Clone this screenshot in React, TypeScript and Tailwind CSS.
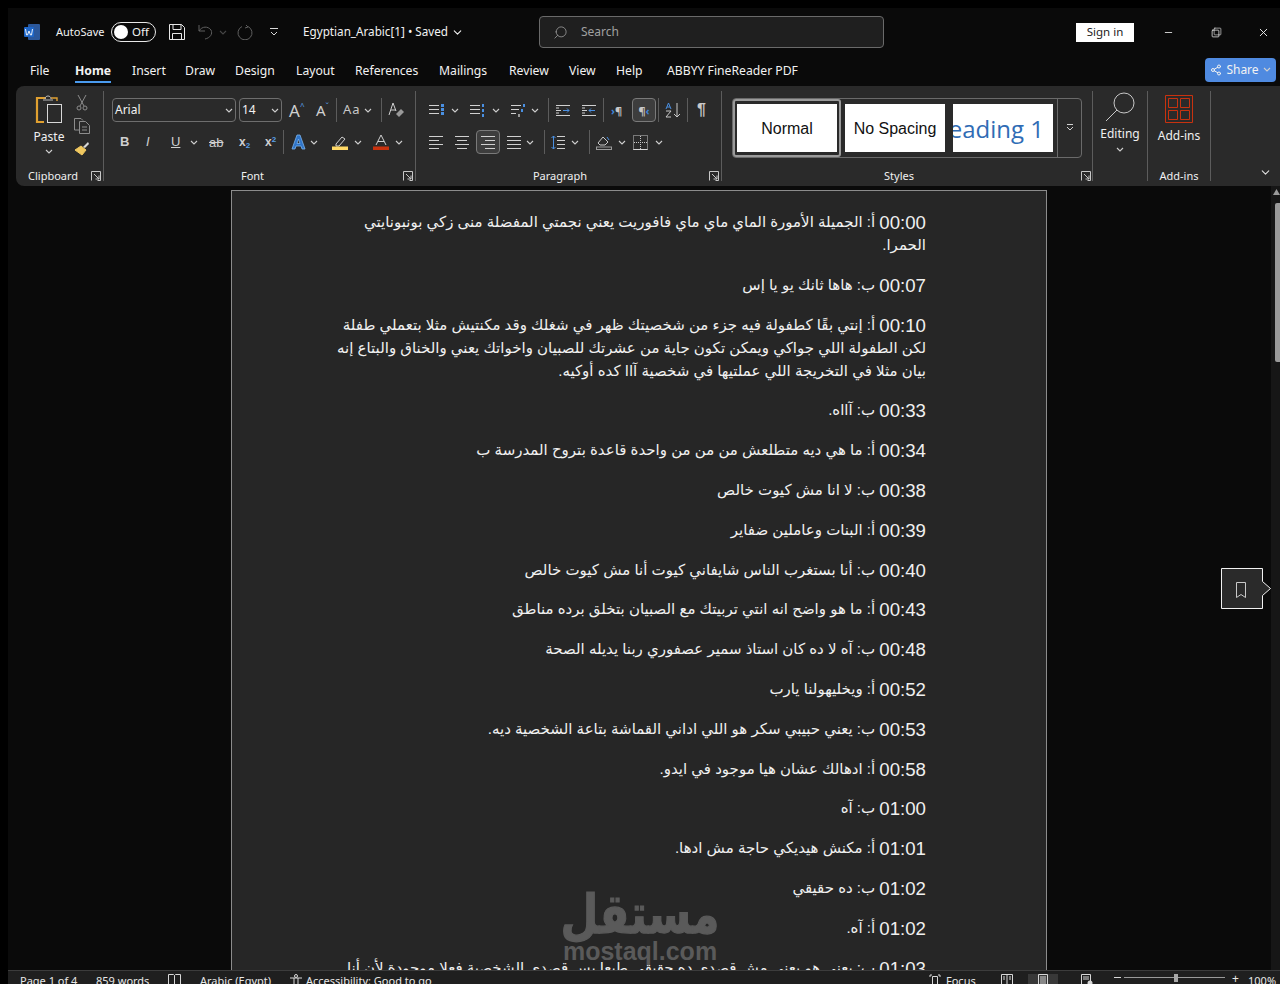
import { ChevronDown, Search, Share2, X, Minus, Square } from "lucide-react";

const ui = "font-['Noto_Sans',sans-serif]";

function Chev({ className = "" }: { className?: string }) {
  return (
    <svg width="8" height="5" viewBox="0 0 8 5" className={"shrink-0 " + className}>
      <path d="M1 1l3 3 3-3" fill="none" stroke="#cfcfcf" strokeWidth="1.1" />
    </svg>
  );
}

function Sep({ className = "" }: { className?: string }) {
  return <div className={"h-[24px] w-px shrink-0 bg-[#5c5c5c] " + className} />;
}

function GroupLabel({ text }: { text: string }) {
  return <div className="text-center text-[11px] leading-[14px] text-[#f0f0f0]">{text}</div>;
}

function Launcher() {
  return (
    <svg width="10" height="10" viewBox="0 0 10 10" className="shrink-0">
      <path d="M.5 9.5V.5h9v9h-3M3 3l5 5M8 4.5V8H4.5" fill="none" stroke="#c8c8c8" />
    </svg>
  );
}

function Lines({ widths, x = 0 }: { widths: number[]; x?: number }) {
  return (
    <>
      {widths.map((w, i) => (
        <line key={i} x1={x} x2={x + w} y1={2.5 + i * 4} y2={2.5 + i * 4} stroke="#d0d0d0" />
      ))}
    </>
  );
}

function AlignIcon({ kind }: { kind: "left" | "center" | "right" | "justify" }) {
  const long = 14;
  const short = 10;
  const xs = kind === "left" ? 0 : kind === "center" ? 2 : 4;
  return (
    <svg width="14" height="15" viewBox="0 0 14 15" className="shrink-0">
      {[0, 1, 2, 3].map((i) => {
        const w = kind === "justify" || i % 2 === 0 ? long : short;
        const x = w === long ? 0 : xs;
        return <line key={i} x1={x} x2={x + w} y1={1.5 + i * 4} y2={1.5 + i * 4} stroke="#d0d0d0" />;
      })}
    </svg>
  );
}

function ClipboardGroup() {
  return (
    <div className="flex h-full w-[87px] shrink-0 flex-col">
      <div className="flex h-[77px] pt-[7px]">
        <div className="ml-[15px] flex w-[36px] flex-col items-center">
          <svg width="30" height="32" viewBox="0 0 30 32">
            <path d="M12 5H3v24h7" fill="none" stroke="#e0a030" strokeWidth="2.2" />
            <path d="M17 5h6v3" fill="none" stroke="#e0a030" strokeWidth="1.4" />
            <path d="M9 7h10M11 6c0-4 6-4 6 0" fill="none" stroke="#b8b8b8" />
            <rect x="13.5" y="11.5" width="14" height="18" fill="#2a2a2a" stroke="#d8d8d8" />
          </svg>
          <div className="mt-[4px] text-[12px] leading-[16px] text-[#f0f0f0]">Paste</div>
          <Chev className="mt-[4px]" />
        </div>
        <div className="ml-[7px] flex flex-col items-center gap-[7px] pt-[1px]">
          <svg width="12" height="17" viewBox="0 0 12 17">
            <path d="M2 1l6 11M10 1L4 12" stroke="#8c8c8c" fill="none" />
            <circle cx="3" cy="14" r="2" stroke="#8c8c8c" fill="none" />
            <circle cx="9" cy="14" r="2" stroke="#8c8c8c" fill="none" />
          </svg>
          <svg width="16" height="16" viewBox="0 0 16 16">
            <path d="M5 12H.5V.5H7l2 2M5.5 3.5h6l4 4v8h-10z M8 9h5M8 12h5" stroke="#8c8c8c" fill="none" />
          </svg>
          <svg width="16" height="15" viewBox="0 0 16 15">
            <path d="M1 9l6-4 5 4-4 5z" fill="#f0c860" stroke="#f0c860" />
            <path d="M9 6l5-5 1 2-4 4" fill="#d8d8d8" />
          </svg>
        </div>
      </div>
      <div className="mt-auto mb-[3px] flex items-center pl-[12px] pr-[1px]">
        <GroupLabel text="Clipboard" />
        <div className="ml-auto pr-[1px]">
          <Launcher />
        </div>
      </div>
    </div>
  );
}

function FontGroup() {
  return (
    <div className="relative flex h-full w-[311px] shrink-0 flex-col pl-[8px]">
      <div className="flex h-[24px] mt-[12px] items-center">
        <div className="flex h-[24px] w-[124px] shrink-0 items-center justify-between rounded-[4px] border border-[#6e6e6e] pl-[2px] pr-[2px] text-[12px] text-[#f2f2f2]">
          <span>Arial</span>
          <Chev />
        </div>
        <div className="ml-[3px] flex h-[24px] w-[43px] shrink-0 items-center justify-between rounded-[4px] border border-[#6e6e6e] pl-[2px] pr-[2px] text-[12px] text-[#f2f2f2]">
          <span>14</span>
          <Chev />
        </div>
        <div className="ml-[7px] flex w-[16px] items-start text-[17px] leading-[17px] text-[#d0d0d0]">
          A<span className="text-[8px] leading-[8px] text-[#5aa0e8]">^</span>
        </div>
        <div className="ml-[11px] flex w-[14px] items-start text-[15px] leading-[15px] text-[#d0d0d0]">
          A<span className="text-[8px] leading-[8px] text-[#5aa0e8]">ˇ</span>
        </div>
        <Sep className="ml-[6px]" />
        <div className="ml-[6px] w-[18px] text-[13px] tracking-[1px] text-[#c8c8c8]">Aa</div>
        <Chev className="ml-[3px]" />
        <Sep className="ml-[9px]" />
        <svg width="17" height="16" viewBox="0 0 17 16" className="ml-[6px]">
          <path d="M1 13L5 1l3 8M3 8h5" fill="none" stroke="#cfcfcf" />
          <path d="M8 12l5-5 3 3-5 5z" fill="#9a9a9a" />
        </svg>
      </div>
      <div className="mt-[8px] flex h-[24px] items-center font-['Liberation_Sans',sans-serif] text-[#cfcfcf]">
        <span className="ml-[8px] w-[9px] text-[13px] font-bold">B</span>
        <span className="ml-[17px] w-[8px] text-[13px] italic">I</span>
        <span className="ml-[17px] w-[10px] text-[13px] underline">U</span>
        <Chev className="ml-[9px]" />
        <span className="ml-[11px] w-[16px] text-[13px] leading-none line-through">ab</span>
        <span className="ml-[14px] w-[12px] text-[12px] font-bold">
          x<sub className="text-[8px] text-[#5aa0e8]">2</sub>
        </span>
        <span className="ml-[14px] w-[12px] text-[12px] font-bold">
          x<sup className="text-[8px] text-[#5aa0e8]">2</sup>
        </span>
        <Sep className="ml-[6px]" />
        <svg width="15" height="16" viewBox="0 0 15 16" className="ml-[7px]">
          <path d="M1 15L6 1h3l5 14h-3l-1-3H5l-1 3zM6 9.5h3L7.5 5z" fill="#2f74c8" stroke="#7ab4ee" strokeWidth=".8" />
        </svg>
        <Chev className="ml-[4px]" />
        <svg width="16" height="16" viewBox="0 0 16 16" className="ml-[14px]">
          <path d="M4 10l6-7 3 2-6 7-3 0z" fill="none" stroke="#cfcfcf" />
          <rect y="12.5" width="16" height="3.5" fill="#ffd966" />
        </svg>
        <Chev className="ml-[6px]" />
        <svg width="16" height="16" viewBox="0 0 16 16" className="ml-[11px]">
          <path d="M3 11L8 1l5 10M5 7.5h6" fill="none" stroke="#cfcfcf" />
          <rect y="12.5" width="16" height="3.5" fill="#c8320f" />
        </svg>
        <Chev className="ml-[6px]" />
      </div>
      <div className="mt-auto mb-[3px] flex items-center">
        <div className="flex-1 pr-[10px]">
          <GroupLabel text="Font" />
        </div>
        <div className="mr-[2px]">
          <Launcher />
        </div>
      </div>
    </div>
  );
}

function ParagraphGroup() {
  return (
    <div className="flex h-full w-[305px] shrink-0 flex-col pl-[13px]">
      <div className="mt-[12px] flex h-[24px] items-center">
        <svg width="16" height="15" viewBox="0 0 16 15">
          <Lines widths={[10, 10, 10]} />
          <rect x="12" y="1" width="3" height="3" fill="#4a90e2" />
          <rect x="12" y="5" width="3" height="3" fill="#4a90e2" />
          <rect x="12" y="9" width="3" height="3" fill="#4a90e2" />
        </svg>
        <Chev className="ml-[6px]" />
        <svg width="16" height="15" viewBox="0 0 16 15" className="ml-[11px]">
          <Lines widths={[10, 10, 10]} />
          <rect x="12" y="1" width="2" height="3" fill="#4a90e2" />
          <rect x="12" y="6" width="2" height="3" fill="#4a90e2" />
          <rect x="12" y="11" width="2" height="3" fill="#4a90e2" />
        </svg>
        <Chev className="ml-[6px]" />
        <svg width="16" height="15" viewBox="0 0 16 15" className="ml-[11px]">
          <Lines widths={[10, 8, 5]} />
          <rect x="12" y="1" width="2" height="3" fill="#4a90e2" />
          <rect x="10" y="6" width="2" height="3" fill="#4a90e2" />
          <rect x="7" y="11" width="2" height="3" fill="#9a9a9a" />
        </svg>
        <Chev className="ml-[4px]" />
        <Sep className="ml-[9px]" />
        <svg width="14" height="11" viewBox="0 0 14 11" className="ml-[7px]">
          <path d="M0 .5h14M0 10.5h14M0 5.5h5M0 3h3M0 8h3" stroke="#d0d0d0" />
          <path d="M7 5.5h6M11 3.5l2 2-2 2" stroke="#4a90e2" fill="none" />
        </svg>
        <svg width="14" height="11" viewBox="0 0 14 11" className="ml-[12px]">
          <path d="M0 .5h14M0 10.5h14M0 5.5h5M0 3h3M0 8h3" stroke="#d0d0d0" />
          <path d="M13 5.5H7M9 3.5l-2 2 2 2" stroke="#4a90e2" fill="none" />
        </svg>
        <Sep className="ml-[7px]" />
        <div className="ml-[7px] flex w-[14px] items-center text-[11px] font-bold leading-none text-[#c8c8c8]">
          <span className="text-[#3f86dc]">›</span>¶
        </div>
        <div className="ml-[7px] flex h-[24px] w-[24px] items-center justify-center rounded-[4px] border border-[#7a7a7a] bg-[#3d3d3d] text-[11px] font-bold leading-none text-[#c8c8c8]">
          ¶<span className="text-[#3f86dc]">‹</span>
        </div>
        <Sep className="ml-[2px]" />
        <svg width="16" height="16" viewBox="0 0 16 16" className="ml-[6px]">
          <path d="M1 7l2.5-6L6 7M2 5h3" fill="none" stroke="#4a90e2" />
          <path d="M1 9h5l-5 6h5" fill="none" stroke="#c8c8c8" />
          <path d="M12 1v14M9 12l3 3 3-3" fill="none" stroke="#c8c8c8" />
        </svg>
        <Sep className="ml-[6px]" />
        <span className="ml-[9px] font-['Liberation_Sans',sans-serif] text-[16px] font-bold leading-none text-[#c8c8c8]">¶</span>
      </div>
      <div className="mt-[8px] flex h-[24px] items-center">
        <AlignIcon kind="left" />
        <div className="ml-[12px]">
          <AlignIcon kind="center" />
        </div>
        <div className="ml-[7px] flex h-[24px] w-[24px] items-center justify-center rounded-[4px] border border-[#7a7a7a] bg-[#3d3d3d]">
          <AlignIcon kind="right" />
        </div>
        <div className="ml-[7px]">
          <AlignIcon kind="justify" />
        </div>
        <Chev className="ml-[5px]" />
        <Sep className="ml-[10px]" />
        <svg width="14" height="15" viewBox="0 0 14 15" className="ml-[6px]">
          <path d="M6 1.5h8M6 5.5h8M6 9.5h8M6 13.5h8" stroke="#d0d0d0" />
          <path d="M2.5 1v13M.5 3l2-2 2 2M.5 12l2 2 2-2" fill="none" stroke="#4a90e2" />
        </svg>
        <Chev className="ml-[6px]" />
        <Sep className="ml-[10px]" />
        <svg width="16" height="16" viewBox="0 0 16 16" className="ml-[6px]">
          <path d="M2 9l5-6 5 5-3 3H4z" fill="none" stroke="#c8c8c8" />
          <path d="M11 3l2 3" stroke="#4a90e2" />
          <rect x=".5" y="13" width="15" height="2.5" fill="none" stroke="#9a9a9a" />
        </svg>
        <Chev className="ml-[6px]" />
        <svg width="15" height="15" viewBox="0 0 15 15" className="ml-[7px]">
          <path d="M.5.5h14v14H.5z" fill="none" stroke="#c8c8c8" strokeDasharray="1 1" />
          <path d="M.5 14.5h14M7.5 1v13M1 7.5h13" fill="none" stroke="#c8c8c8" strokeDasharray="1 1" />
          <path d="M.5 14.5h14" stroke="#d8d8d8" />
        </svg>
        <Chev className="ml-[7px]" />
      </div>
      <div className="mt-auto mb-[3px] flex items-center">
        <div className="flex-1 pr-[18px]">
          <GroupLabel text="Paragraph" />
        </div>
        <div className="mr-[2px]">
          <Launcher />
        </div>
      </div>
    </div>
  );
}

function StyleCard({ children, className = "" }: { children: React.ReactNode; className?: string }) {
  return (
    <div className={"flex h-[48px] w-[100px] shrink-0 items-center overflow-hidden bg-white pt-[2px] " + className}>{children}</div>
  );
}

function StylesGroup() {
  return (
    <div className="flex h-full w-[370px] shrink-0 flex-col pl-[10px]">
      <div className="mt-[12px] flex h-[60px] w-[350px] items-stretch rounded-[4px] border border-[#6a6a6a]">
        <div className="flex items-center gap-[8px]">
          <div className="flex h-[58px] w-[108px] items-center justify-center rounded-[3px] border-2 border-double border-[#9a9a9a]">
            <StyleCard className="justify-center font-['Liberation_Sans',sans-serif] text-[16px] text-[#111]">Normal</StyleCard>
          </div>
          <StyleCard className="-ml-[4px] justify-center font-['Liberation_Sans',sans-serif] text-[16px] text-[#111]">No Spacing</StyleCard>
          <StyleCard className="justify-end pr-[9px] font-['Open_Sans',sans-serif] text-[24px] text-[#2f6cb5]">
            <span className="shrink-0 whitespace-nowrap">Heading 1</span>
          </StyleCard>
        </div>
        <div className="ml-auto flex w-[24px] items-center justify-center border-l border-[#6a6a6a]">
          <svg width="10" height="8" viewBox="0 0 10 8">
            <path d="M2 .5h6M2 3l3 3 3-3" fill="none" stroke="#d0d0d0" />
          </svg>
        </div>
      </div>
      <div className="mt-auto mb-[3px] flex items-center">
        <div className="flex-1 pr-[15px]">
          <GroupLabel text="Styles" />
        </div>
        <div className="mr-[1px]">
          <Launcher />
        </div>
      </div>
    </div>
  );
}

function App() {
  const tabs = [
    { t: "File", cls: "ml-[22px] w-[45px]" },
    { t: "Home", cls: "w-[57px]" },
    { t: "Insert", cls: "w-[53px]" },
    { t: "Draw", cls: "w-[50px]" },
    { t: "Design", cls: "w-[61px]" },
    { t: "Layout", cls: "w-[59px]" },
    { t: "References", cls: "w-[84px]" },
    { t: "Mailings", cls: "w-[70px]" },
    { t: "Review", cls: "w-[60px]" },
    { t: "View", cls: "w-[47px]" },
    { t: "Help", cls: "w-[51px]" },
    { t: "ABBYY FineReader PDF", cls: "" },
  ];

  const paras = [
    ["00:00", "أ: الجميلة الأمورة الماي ماي ماي فافوريت يعني نجمتي المفضلة منى زكي بونبونايتي الحمرا."],
    ["00:07", "ب: هاها ثانك يو يا إس"],
    ["00:10", "أ: إنتي بقًا كطفولة فيه جزء من شخصيتك ظهر في شغلك وقد مكنتيش مثلا بتعملي طفلة لكن الطفولة اللي جواكي ويمكن تكون جاية من عشرتك للصبيان واخواتك يعني والخناق والبتاع إنه بيان مثلا في التخريجة اللي عملتيها في شخصية آاا كده أوكيه."],
    ["00:33", "ب: آااه."],
    ["00:34", "أ: ما هي ديه متطلعش من من من واحدة قاعدة بتروح المدرسة ب"],
    ["00:38", "ب: لا انا مش كيوت خالص"],
    ["00:39", "أ: البنات وعاملين ضفاير"],
    ["00:40", "ب: أنا بستغرب الناس شايفاني كيوت أنا مش كيوت خالص"],
    ["00:43", "أ: ما هو واضح انه انتي تربيتك مع الصبيان بتخلق برده مناطق"],
    ["00:48", "ب: آه لا ده كان استاذ سمير عصفوري ربنا يديله الصحة"],
    ["00:52", "أ: ويخليهولنا يارب"],
    ["00:53", "ب: يعني حبيبي سكر هو اللي اداني القماشة بتاعة الشخصية ديه."],
    ["00:58", "أ: ادهالك عشان هيا موجود في ايدو."],
    ["01:00", "ب: آه"],
    ["01:01", "أ: مكنش هيديكي حاجة مش ادها."],
    ["01:02", "ب: ده حقيقي"],
    ["01:02", "أ: آه."],
    ["01:03", "ب: يعني هو يعني مش قصدي ده حقيقي طبعا بس قصدي الشخصية فعلا موجودة لأن أنا أما بدأ"],
  ];

  return (
    <div className={"h-[984px] w-[1280px] overflow-hidden bg-black pl-[8px] pt-[8px] " + ui}>
      <div className="flex h-[976px] flex-col bg-[#0a0a0a]">
        {/* title bar */}
        <div className="flex h-[48px] shrink-0 items-center text-[12px] text-[#f2f2f2]">
          <svg width="16" height="16" viewBox="0 0 16 16" className="ml-[16px] shrink-0">
            <rect x="4" y="0" width="12" height="16" rx="1" fill="#2b579a" />
            <rect x="0" y="3" width="10" height="10" rx="1" fill="#1e66c8" />
            <path d="M1.5 5l1 6h1l1.5-4 1.5 4h1l1-6" fill="none" stroke="#fff" strokeWidth=".9" />
          </svg>
          <span className="ml-[16px] w-[55px] text-[11px]">AutoSave</span>
          <div className="flex h-[20px] w-[45px] shrink-0 items-center rounded-full border border-[#e8e8e8] pl-[2px]">
            <div className="h-[14px] w-[14px] rounded-full bg-white" />
            <span className="ml-[4px] text-[11.5px]">Off</span>
          </div>
          <svg width="16" height="16" viewBox="0 0 16 16" className="ml-[13px] shrink-0">
            <path d="M.5.5h12l3 3v12H.5zM4 .5v5h8v-5M3.5 15.5v-6h9v6" fill="none" stroke="#e8e8e8" />
          </svg>
          <svg width="16" height="16" viewBox="0 0 16 16" className="ml-[13px] shrink-0">
            <path d="M1 1v6h6M1 7c3-5 9-5 12-1 2 4-1 8-6 9" fill="none" stroke="#5e5e5e" />
          </svg>
          <Chev className="ml-[5px] opacity-30" />
          <svg width="16" height="16" viewBox="0 0 16 16" className="ml-[10px] shrink-0">
            <path d="M5 2.5A7 7 0 1 0 11 2.5M9 1l2 2-3 1" fill="none" stroke="#5e5e5e" />
          </svg>
          <svg width="8" height="8" viewBox="0 0 8 8" className="ml-[17px] shrink-0">
            <path d="M0 .5h8M1 4l3 3 3-3" fill="none" stroke="#d8d8d8" />
          </svg>
          <span className="ml-[25px] whitespace-nowrap text-[11.7px]">Egyptian_Arabic[1] • Saved</span>
          <ChevronDown size={13} className="ml-[3px] shrink-0" />
          <div className="ml-[75px] flex h-[32px] w-[345px] shrink-0 items-center rounded-[4px] border border-[#6a6a6a] bg-[#1f1f1f] pl-[13px] text-[#a0a0a0]">
            <Search size={15} className="-scale-x-100" strokeWidth={1.25} />
            <span className="ml-[13px] text-[12px]">Search</span>
          </div>
          <div className="ml-[192px] flex h-[19px] w-[58px] shrink-0 items-center justify-center bg-white text-[11.5px] text-[#222]">Sign in</div>
          <Minus size={11} className="ml-[29px] shrink-0" strokeWidth={1.8} />
          <div className="relative ml-[37px] h-[11px] w-[11px] shrink-0">
            <Square size={9} className="absolute bottom-0 left-0" strokeWidth={2} />
            <Square size={9} className="absolute right-0 top-0" strokeWidth={1.6} />
          </div>
          <X size={13} className="ml-[35px] shrink-0" strokeWidth={1.7} />
        </div>

        {/* tabs */}
        <div className="flex h-[30px] shrink-0 items-center text-[12.2px] text-[#f2f2f2]">
          {tabs.map((tab) => (
            <div key={tab.t} className={"shrink-0 whitespace-nowrap " + tab.cls}>
              {tab.t === "Home" ? (
                <span className="relative inline-block font-bold">
                  {tab.t}
                  <span className="absolute -bottom-[3px] left-0 h-[2px] w-full bg-[#4a9bef]" />
                </span>
              ) : (
                tab.t
              )}
            </div>
          ))}
          <div className="ml-auto mb-[3px] mr-[4px] flex h-[24px] w-[71px] items-center justify-center gap-[4px] rounded-[4px] bg-[#4f8ae0] text-[12px]">
            <Share2 size={12} />
            <span>Share</span>
            <Chev />
          </div>
        </div>

        {/* ribbon */}
        <div className="ml-[8px] flex h-[100px] shrink-0 rounded-l-[8px] bg-[#2a2a2a]">
          <ClipboardGroup />
          <div className="my-[5px] w-px bg-[#5c5c5c]" />
          <FontGroup />
          <div className="my-[5px] w-px bg-[#5c5c5c]" />
          <ParagraphGroup />
          <div className="my-[5px] w-px bg-[#5c5c5c]" />
          <StylesGroup />
          <div className="my-[5px] w-px bg-[#5c5c5c]" />
          <div className="flex w-[54px] shrink-0 flex-col items-center pt-[6px]">
            <svg width="30" height="30" viewBox="0 0 30 30">
              <circle cx="19" cy="11" r="10" fill="none" stroke="#c8c8c8" />
              <path d="M12 18L1 29" stroke="#c8c8c8" />
            </svg>
            <div className="mt-[4px] text-[12px] leading-[16px] text-[#f0f0f0]">Editing</div>
            <Chev className="mt-[5px]" />
          </div>
          <div className="my-[5px] w-px bg-[#5c5c5c]" />
          <div className="flex w-[62px] shrink-0 flex-col items-center pt-[9px]">
            <svg width="28" height="28" viewBox="0 0 28 28">
              <path d="M.5.5h27v27H.5zM3.5 3.5h9v9h-9zM15.5 3.5h9v9h-9zM3.5 15.5h9v9h-9zM15.5 15.5h9v9h-9z" fill="none" stroke="#c8320f" />
            </svg>
            <div className="mt-[5px] text-[12px] leading-[16px] text-[#f0f0f0]">Add-ins</div>
            <div className="mb-[3px] mt-auto">
              <GroupLabel text="Add-ins" />
            </div>
          </div>
          <div className="my-[5px] w-px bg-[#5c5c5c]" />
          <div className="flex flex-1 items-end justify-end pb-[7px] pr-[8px]">
            <ChevronDown size={13} className="text-[#e0e0e0]" />
          </div>
        </div>

        {/* document area */}
        <div className="relative flex min-h-0 flex-1">
          <div className="flex min-w-0 flex-1 justify-start pl-[223px] pt-[4px]">
            <div className="relative h-[780px] w-[816px] shrink-0 overflow-hidden border border-b-0 border-[#8c8c8c] bg-[#262626] pl-[103px] pr-[120px] pt-[21px] font-['Liberation_Sans','DejaVu_Sans',sans-serif] text-[15px] leading-[23px] text-[#f0f0f0]">
              {paras.map((p, i) => (
                <p key={i} dir="rtl" className="mb-[16.8px] text-right">
                  <span className="text-[18.67px] leading-none">{p[0]}</span>{" "}
                  <span className="align-[2px] leading-[18px]">{p[1]}</span>
                </p>
              ))}
              <div className="absolute left-[331px] top-[698px] flex w-[154px] flex-col items-center text-[#5a5a5a]">
                <span dir="rtl" className="inline-block scale-y-125 font-['DejaVu_Sans',sans-serif] text-[43.5px] font-bold leading-[50px] [-webkit-text-stroke:1px_#5a5a5a]">مستقل</span>
                <span className="whitespace-nowrap text-[25px] font-bold leading-[24px]">mostaql.com</span>
              </div>
            </div>
          </div>
          <div className="flex w-[9px] shrink-0 flex-col items-end bg-[#161616] pt-[3px]">
            <svg width="7" height="6" viewBox="0 0 7 6" className="ml-auto">
              <path d="M3.5 0L7 6H0z" fill="#9a9a9a" />
            </svg>
            <div className="mt-[8px] h-[159px] w-[5px] rounded-l-[2px] bg-[#9a9a9a]" />
          </div>
          <div className="absolute left-[1213px] top-[382px]">
            <svg width="50" height="42" viewBox="0 0 50 42">
              <path d="M.5.5h41v13l8 7-8 7v13H.5z" fill="#2a2a2a" stroke="#f2f2f2" />
              <path d="M15.5 14.5h9v15l-4.5-3-4.5 3z" fill="none" stroke="#c8c8c8" />
            </svg>
          </div>
        </div>

        {/* status bar */}
        <div className="flex h-[14px] shrink-0 items-start overflow-hidden border-t border-[#3c3c3c] bg-[#1f1f1f] pt-[3px] text-[11px] leading-[14px] text-[#e8e8e8]">
          <span className="ml-[12px] w-[76px] shrink-0">Page 1 of 4</span>
          <span className="w-[72px] shrink-0">859 words</span>
          <svg width="13" height="12" viewBox="0 0 13 12" className="shrink-0">
            <path d="M.5.5h5l1 1 1-1h5v10h-12zM6.5 1.5v9" fill="none" stroke="#d8d8d8" />
          </svg>
          <span className="ml-[19px] w-[89px] shrink-0">Arabic (Egypt)</span>
          <svg width="15" height="12" viewBox="0 0 15 12" className="shrink-0">
            <circle cx="7" cy="2" r="1.5" fill="none" stroke="#d8d8d8" />
            <path d="M1 4h12M5 4v8M9 4v8" stroke="#d8d8d8" />
          </svg>
          <span className="ml-[2px] w-[126px] shrink-0 whitespace-nowrap">Accessibility: Good to go</span>
          <svg width="12" height="12" viewBox="0 0 12 12" className="ml-[497px] shrink-0">
            <path d="M1 3V1h2M9 1h2v2M3.5 2.5h5v9h-5z" fill="none" stroke="#d8d8d8" />
          </svg>
          <span className="ml-[5px] w-[55px] shrink-0">Focus</span>
          <svg width="12" height="12" viewBox="0 0 12 12" className="shrink-0">
            <path d="M.5.5h11v11H.5zM6 .5v11M2 3h2M2 5h2M8 3h2M8 5h2" fill="none" stroke="#d8d8d8" />
          </svg>
          <div className="ml-[15px] flex w-[30px] shrink-0 justify-center bg-[#383838]">
            <svg width="10" height="14" viewBox="0 0 10 14">
              <path d="M.5.5h9v13h-9zM2 3h6M2 5h6M2 7h6M2 9h6" fill="none" stroke="#d8d8d8" />
            </svg>
          </div>
          <svg width="12" height="12" viewBox="0 0 12 12" className="ml-[23px] shrink-0">
            <path d="M.5.5h9v11H.5zM2 3h6M2 5h6" fill="none" stroke="#d8d8d8" />
            <circle cx="9" cy="9" r="2.5" fill="#d8d8d8" />
          </svg>
          <span className="ml-[21px] mt-[3px] h-px w-[7px] shrink-0 bg-[#d8d8d8]" />
          <div className="relative ml-[3px] mt-[3px] h-px w-[101px] shrink-0 bg-[#9a9a9a]">
            <div className="absolute -top-[3px] left-[50px] h-[8px] w-[4px] bg-[#a8a8a8]" />
          </div>
          <span className="ml-[7px] w-[9px] shrink-0 text-[12px] leading-[10px]">+</span>
          <span className="ml-[7px] whitespace-nowrap">100%</span>
        </div>
      </div>
    </div>
  );
}

export default App;
